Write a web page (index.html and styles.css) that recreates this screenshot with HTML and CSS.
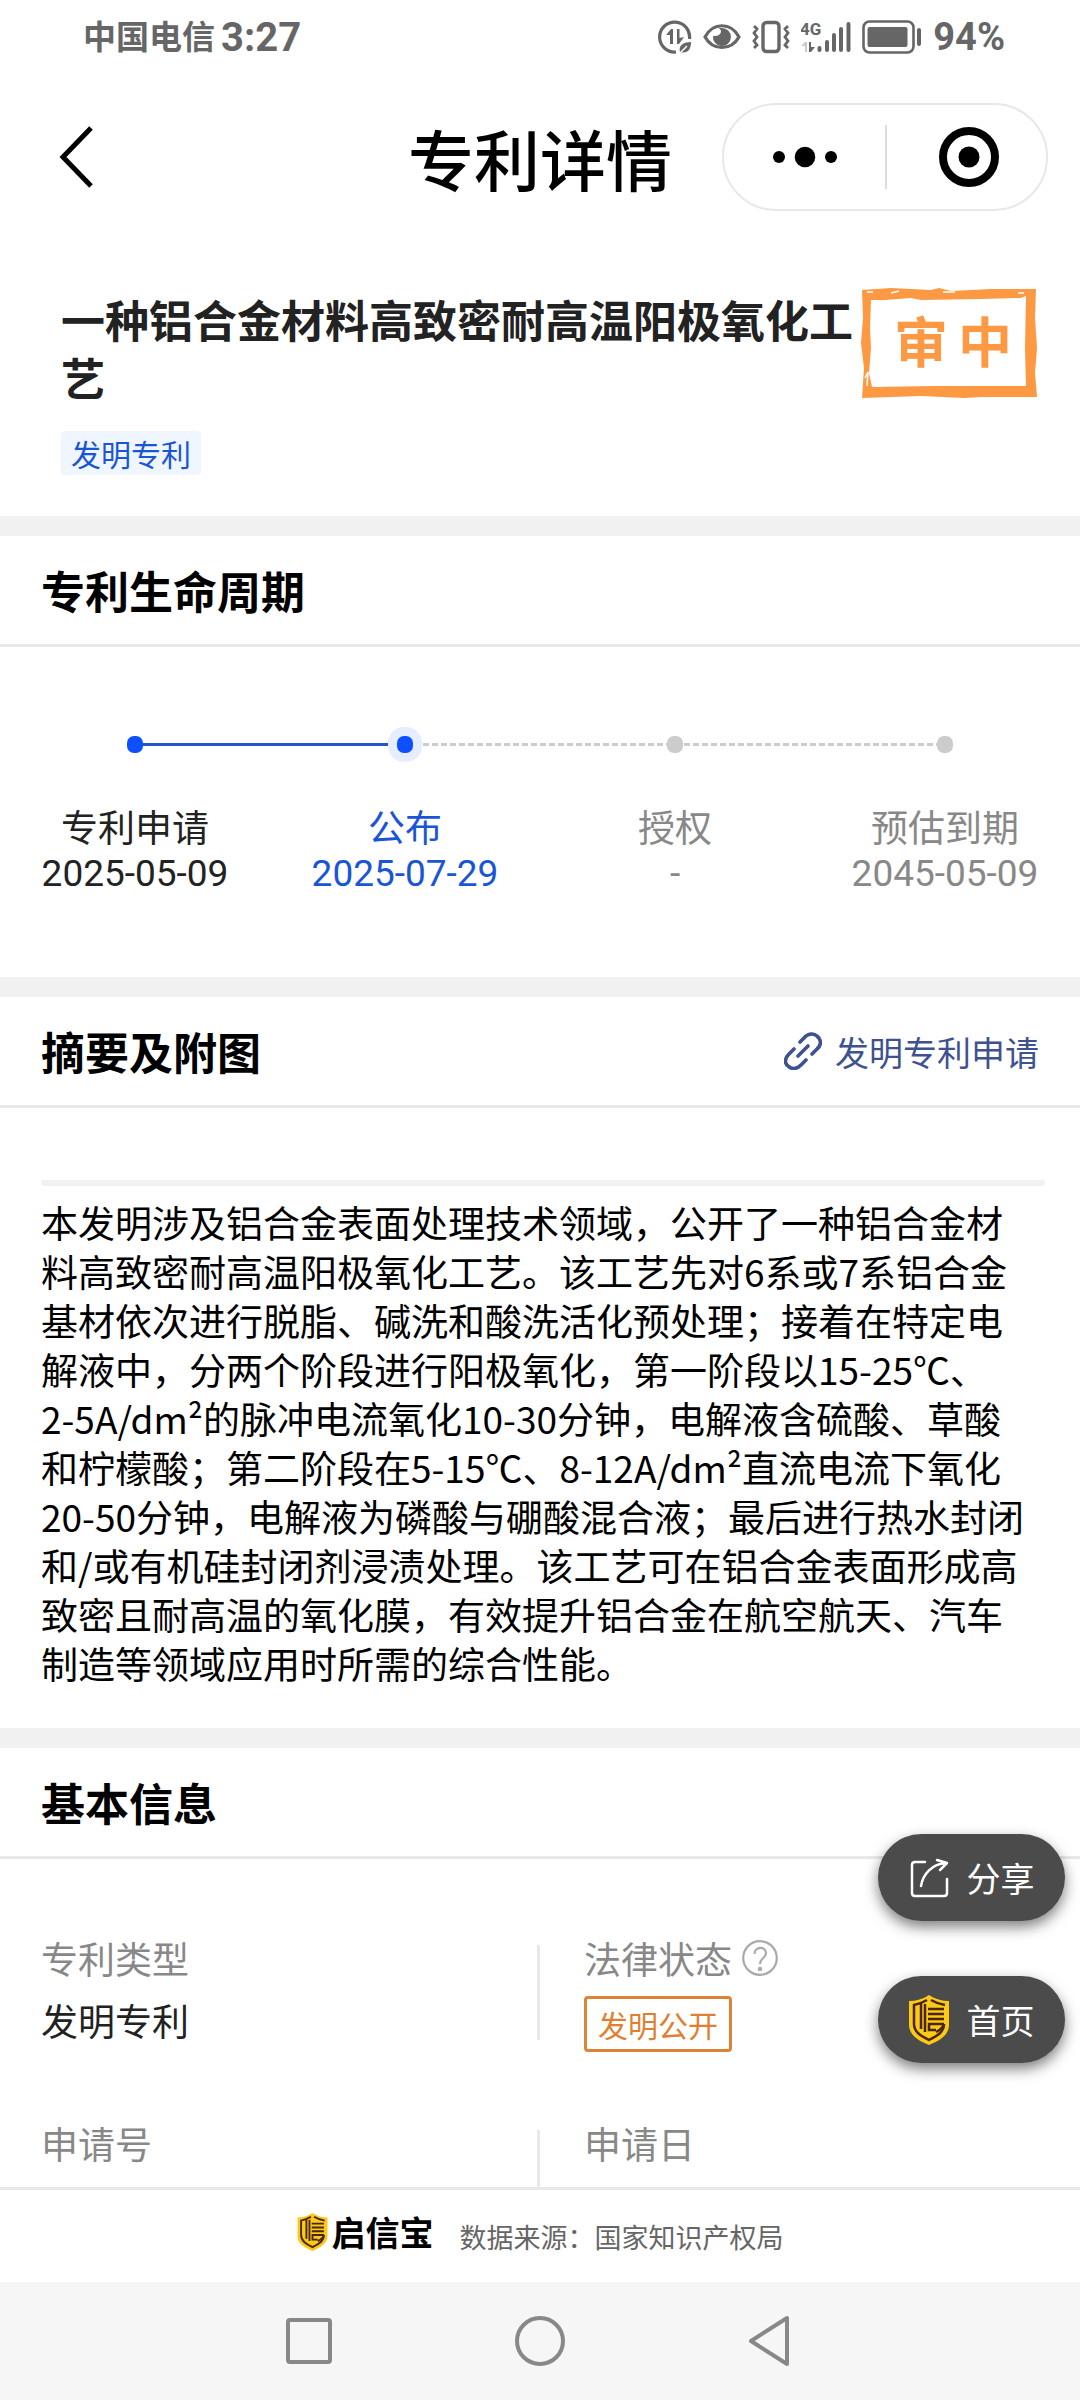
FILE: index.html
```html
<!DOCTYPE html>
<html lang="zh-CN">
    <head>
        <title>专利详情</title>
        <meta charset="utf-8">
        <meta name="viewport" content="width=device-width, initial-scale=1">
        <link rel="stylesheet" href="styles.css">
    </head>
    <body>
        <!-- shield logo, used by the home button and the footer -->
        <svg class="defs" width="0" height="0">
            <symbol id="shield" viewBox="0 0 40 50">
                <path d="M20 0 C14 4 7 6 0 6 V30 C0 40 10 46 20 50 C30 46 40 40 40 30 V6 C33 6 26 4 20 0Z" fill="#fbca16"/>
                <path d="M18 5 C14 7.500 10 9 5 10 V29 C5 37 12 41 20 45 C28 41 35 37 35 29" fill="none" stroke="#4a2606" stroke-width="2.500"/>
                <path d="M22 5 C26 7.500 30 9 36 10 M12 9 V34 M16 9 V37 M19 14 H35 M19 19 H35 M19 24 H35 M35 29 H20 V35 H27 M35 29 C34 33 31 35 27 37" fill="none" stroke="#4a2606" stroke-width="2.500"/>
            </symbol>
        </svg>
        <div class="app">
            <div class="status">
                <span class="carrier">中国电信</span>
                <span class="clock">3:27</span>
                <div class="status-icons">
                    <svg width="34" height="34" viewBox="0 0 34 34">
                        <path d="M31.500 19 A15 15 0 1 0 18 32" fill="none" stroke="#666" stroke-width="3.200"/>
                        <path d="M8 15 L13 9 H15 V24 H12 V15Z M19 9 H21.500 V18 L26 17 L21 24 H19Z" fill="#666"/>
                        <path d="M22 32 C20 25 26 22 33 22 C33 30 29 34 22 32Z" fill="#666"/>
                        <path d="M21 34 L29 26" stroke="#fff" stroke-width="1.500"/>
                    </svg>
                    <svg width="38" height="34" viewBox="0 0 38 34">
                        <path d="M2 17 C10 2 28 2 36 17 C28 31 10 31 2 17Z" fill="none" stroke="#666" stroke-width="3.200"/>
                        <path d="M15 8 C20 9 19 17 10 16 A9 9 0 1 0 19 8Z" fill="#666"/>
                    </svg>
                    <svg width="38" height="34" viewBox="0 0 38 34" fill="none" stroke="#666">
                        <rect x="11" y="2.500" width="16" height="29" rx="3.500" stroke-width="3.400"/>
                        <path d="M2 6 L5 9 L2 13 L5 17 L2 21 L5 25 L2 28 M36 6 L33 9 L36 13 L33 17 L36 21 L33 25 L36 28" stroke-width="2.800"/>
                    </svg>
                    <svg width="50" height="34" viewBox="0 0 50 34">
                        <text x="-1" y="15" class="net">4G</text>
                        <path d="M0 26 L4 22 H6 V32 H4 V26Z" fill="#ccc"/>
                        <path d="M8 22 H10 V27 H14 L10 32 H8Z" fill="#666"/>
                        <path d="M18.500 28 V30 M26 22 V30 M33 15 V30 M40 9 V30 M47.500 4 V30" stroke="#666" stroke-width="4" stroke-linecap="round"/>
                    </svg>
                    <svg width="60" height="34" viewBox="0 0 60 34">
                        <rect x="1.500" y="1.500" width="50" height="31" rx="6" fill="none" stroke="#666" stroke-width="2.600"/>
                        <rect x="5.500" y="7" width="40" height="20" rx="2" fill="#666"/>
                        <rect x="55" y="8" width="4" height="18" rx="2" fill="#666"/>
                    </svg>
                    <span class="battery">94%</span>
                </div>
            </div>

            <header class="navbar">
                <button class="back" aria-label="返回">
                    <svg width="36" height="64" viewBox="0 0 36 64"><path d="M32 3 L4 32 L32 61" fill="none" stroke="#000" stroke-width="5"/></svg>
                </button>
                <span class="navbar-title">专利详情</span>
                <div class="capsule">
                    <button aria-label="更多">
                        <svg width="64" height="22" viewBox="0 0 64 22"><circle cx="6" cy="11" r="6"/><circle cx="32" cy="11" r="10.300"/><circle cx="58" cy="11" r="6"/></svg>
                    </button>
                    <button aria-label="关闭">
                        <svg width="60" height="60" viewBox="0 0 60 60"><circle cx="30" cy="30" r="26" fill="none" stroke="#000" stroke-width="8"/><circle cx="30" cy="30" r="10.500"/></svg>
                    </button>
                </div>
            </header>

            <main>
                <section class="summary">
                    <div class="summary-text">
                        <h1>一种铝合金材料高致密耐高温阳极氧化工艺</h1>
                        <span class="tag">发明专利</span>
                    </div>
                    <svg class="stamp" width="176" height="110" viewBox="0 0 176 110">
                        <path d="M1 2 L30 0 L70 2 L78 0 L90 3 L130 1 L175 1 L174 30 L176 60 L174 85 L176 109 L120 109 L104 110 L60 108 L30 109 L1 110 L3 80 L0 55 L2 30Z M10 12 L9 40 L10 60 L8 85 L11 99 L75 98 L110 98 L165 98 L164 60 L165 8 L160 10 L120 11 L60 12 L50 10 L24 12Z" fill="#fd9843" fill-rule="evenodd"/>
                        <path d="M6 4 H12 M82 4 H94 M30 5 L38 3 M4 90 L7 84 L6 98 M157 5 H163" stroke="#fff" stroke-width="1.500" fill="none"/>
                        <text x="33" y="75">审</text>
                        <text x="97" y="75">中</text>
                    </svg>
                </section>

                <section>
                    <div class="section-head">
                        <h2>专利生命周期</h2>
                    </div>
                    <ol class="timeline">
                        <li class="done"><i></i><span>专利申请</span><time>2025-05-09</time></li>
                        <li class="current"><i></i><span>公布</span><time>2025-07-29</time></li>
                        <li><i></i><span>授权</span><time>-</time></li>
                        <li><i></i><span>预估到期</span><time>2045-05-09</time></li>
                    </ol>
                </section>

                <section>
                    <div class="section-head">
                        <h2>摘要及附图</h2>
                        <a href="#">
                            <svg width="38" height="38" viewBox="0 0 38 38" fill="none" stroke="#3f5290" stroke-width="3.600" stroke-linecap="round">
                                <path d="M16 10 L20 6 C24 1 30 1 33 4 C38 8 37 14 33 17 L28 22"/>
                                <path d="M10 17 L5 22 C1 26 0 31 4 34 C8 38 13 37 17 33 L22 28"/>
                                <path d="M14 24 L24 14"/>
                            </svg>
                            发明专利申请
                        </a>
                    </div>
                    <div class="abstract">
                        <hr>
                        <p>本发明涉及铝合金表面处理技术领域，公开了一种铝合金材料高致密耐高温阳极氧化工艺。该工艺先对6系或7系铝合金基材依次进行脱脂、碱洗和酸洗活化预处理；接着在特定电解液中，分两个阶段进行阳极氧化，第一阶段以15-25℃、<br>2-5A/dm²的脉冲电流氧化10-30分钟，电解液含硫酸、草酸<br>和柠檬酸；第二阶段在5-15℃、8-12A/dm²直流电流下氧化<br>20-50分钟，电解液为磷酸与硼酸混合液；最后进行热水封闭<br>和/或有机硅封闭剂浸渍处理。该工艺可在铝合金表面形成高<br>致密且耐高温的氧化膜，有效提升铝合金在航空航天、汽车<br>制造等领域应用时所需的综合性能。</p>
                    </div>
                </section>

                <section>
                    <div class="section-head">
                        <h2>基本信息</h2>
                    </div>
                    <dl class="info">
                        <div>
                            <dt>专利类型</dt>
                            <dd>发明专利</dd>
                        </div>
                        <div>
                            <dt>法律状态
                                <svg width="36" height="36" viewBox="0 0 36 36" fill="none" stroke="#aaa" stroke-width="2.200">
                                    <circle cx="18" cy="18" r="16.800"/>
                                    <path d="M12.500 14 C12.500 6 24 6 24 13 C24 18 18 18 18 24"/>
                                    <circle cx="18" cy="29" r="1.200" fill="#aaa"/>
                                </svg>
                            </dt>
                            <dd><span class="state">发明公开</span></dd>
                        </div>
                        <div>
                            <dt>申请号</dt>
                        </div>
                        <div>
                            <dt>申请日</dt>
                        </div>
                    </dl>
                </section>
            </main>

            <div class="floats">
                <button>
                    <svg width="40" height="40" viewBox="0 0 40 40" fill="none" stroke="#fff" stroke-width="2.500" stroke-linecap="round" stroke-linejoin="round">
                        <path d="M16 4 H6 Q3 4 3 7 V35 Q3 38 6 38 H35 Q38 38 38 35 V21"/>
                        <path d="M12 28 C14 16 23 6 37 5 M28 2 L38 5 L31 12"/>
                    </svg>
                    分享
                </button>
                <button>
                    <svg width="40" height="50"><use href="#shield"/></svg>
                    首页
                </button>
            </div>

            <footer class="source">
                <div class="brand">
                    <svg width="31" height="38" viewBox="0 0 40 50"><use href="#shield"/></svg>
                    <b>启信宝</b>
                </div>
                <span>数据来源：国家知识产权局</span>
            </footer>

            <nav class="system">
                <button aria-label="任务"><svg width="46" height="46"><rect x="2" y="2" width="42" height="42" rx="2"/></svg></button>
                <button aria-label="主屏幕"><svg width="52" height="52"><circle cx="26" cy="26" r="23"/></svg></button>
                <button aria-label="后退"><svg width="46" height="52"><path d="M39 3 V49 L3 26Z"/></svg></button>
            </nav>
        </div>
    </body>
</html>
```
FILE: styles.css
```css
*{
    box-sizing: border-box;
}
body{
    margin: 0;
    background-color: white;
    color: black;
    font-family: "Noto Sans CJK SC", sans-serif;
    font-size: 37px;
    line-height: 49px;
}
button{
    margin: 0;
    padding: 0;
    border: none;
    background: none;
    font: inherit;
    color: inherit;
}
svg{
    display: block;
    flex: none;
}
h1, h2, p, ol, dl, dd, hr{
    margin: 0;
    padding: 0;
}
.defs{
    position: absolute;
}
.app{
    position: relative;
    display: flex;
    flex-direction: column;
    height: 100vh;
    overflow: hidden;
}

/* phone status bar */
.status{
    display: flex;
    align-items: center;
    height: 74px;
    padding: 0 75px 0 83px;
    color: #666;
    font-family: Roboto, "Noto Sans CJK SC", sans-serif;
    font-weight: bold;
}
.carrier{
    font-size: 33px;
}
.clock{
    margin-left: 6px;
    font-size: 40px;
}
.battery{
    font-size: 38px;
}
.status-icons{
    display: flex;
    align-items: center;
    gap: 11px;
    margin-left: auto;
}
.net{
    font-size: 17px;
    fill: #666;
}

/* title bar */
.navbar{
    display: grid;
    grid-template-columns: 1fr auto 1fr;
    align-items: center;
    height: 166px;
    padding: 0 32px;
}
.back{
    justify-self: start;
    margin-left: 27px;
}
.navbar-title{
    font-size: 66px;
    line-height: 80px;
    font-weight: 500;
}
.capsule{
    justify-self: end;
    display: flex;
    width: 326px;
    height: 108px;
    padding: 20px 0;
    border: 2px solid #e8e8e8;
    border-radius: 54px;
}
.capsule button{
    display: flex;
    align-items: center;
    justify-content: center;
    width: 50%;
}
.capsule button + button{
    padding-left: 5px;
    border-left: 2px solid #ddd;
}

main{
    flex: 1;
    min-height: 0;
    overflow: hidden;
}
section + section{
    border-top: 20px solid #f1f1f1;
}

.summary{
    display: flex;
    justify-content: space-between;
    padding: 48px 43px 41px 61px;
}
.summary-text{
    flex: 1;
}
h1{
    padding-top: 2px;
    font-size: 44px;
    line-height: 58px;
    color: #222;
}
.tag{
    display: inline-block;
    margin-top: 25px;
    padding: 0 10px;
    border-radius: 4px;
    background-color: #f0f6ff;
    color: #1a55d8;
    font-size: 30px;
    line-height: 44px;
}
.stamp text{
    font-size: 54px;
    font-weight: bold;
    fill: #fd9843;
}

.section-head{
    display: flex;
    align-items: center;
    justify-content: space-between;
    height: 111px;
    padding: 0 41px;
    border-bottom: 3px solid #e8e8e8;
}
h2{
    font-size: 44px;
    line-height: 58px;
}
.section-head a{
    display: flex;
    align-items: center;
    gap: 13px;
    color: #3f5290;
    font-size: 34px;
    text-decoration: none;
}

/* life cycle */
.timeline{
    display: grid;
    grid-template-columns: repeat(4, 1fr);
    height: 330px;
    padding-top: 80px;
    list-style: none;
}
.timeline li{
    position: relative;
    display: flex;
    flex-direction: column;
    align-items: center;
    color: #888;
    line-height: 48px;
}
.timeline time{
    font-family: Roboto, sans-serif;
}
.timeline i{
    z-index: 1;
    width: 16px;
    height: 17px;
    margin: 9px 0 49px;
    border-radius: 7px;
    background-color: #ccc;
}
.timeline li + li::before{
    content: "";
    position: absolute;
    top: 16px;
    right: 50%;
    width: 100%;
    height: 3px;
    background: repeating-linear-gradient(90deg, #ccc 0 6px, transparent 6px 9px);
}
.timeline .done{
    color: #222;
}
.timeline .current{
    color: #1a55d8;
}
.timeline .done i, .timeline .current i{
    background-color: #0c50ff;
}
.timeline .current i{
    box-shadow: 0 0 0 9px #e6edff;
}
.timeline .current::before{
    background: #2255cc !important;
}

.abstract{
    padding: 72px 41px 40px;
}
hr{
    height: 6px;
    margin-right: -6px;
    margin-bottom: 12px;
    border: none;
    border-radius: 3px;
    background-color: #f1f1f1;
}

/* basic info */
.info{
    display: grid;
    grid-template-columns: 1fr 1fr;
    row-gap: 90px;
    padding-top: 86px;
}
.info div{
    height: 95px;
    padding-left: 41px;
}
.info div:nth-child(even){
    margin-left: -3px;
    padding-left: 44px;
    border-left: 3px solid #e8e8e8;
}
dt{
    display: flex;
    align-items: center;
    gap: 10px;
    height: 26px;
    color: #888;
}
dd{
    margin-top: 25px;
    color: #222;
}
.state{
    display: inline-block;
    padding: 0 11px;
    border: 3px solid #dd8336;
    border-radius: 4px;
    color: #e07f30;
    font-size: 30px;
    line-height: 50px;
}

.floats{
    position: absolute;
    right: 15px;
    bottom: 337px;
    display: flex;
    flex-direction: column;
    gap: 55px;
}
.floats button{
    display: flex;
    align-items: center;
    justify-content: center;
    gap: 18px;
    width: 187px;
    height: 87px;
    border-radius: 44px;
    background-color: #4b4b4b;
    box-shadow: 0 6px 14px rgba(0, 0, 0, 0.5);
    color: white;
    font-size: 34px;
}

.source{
    display: flex;
    align-items: center;
    justify-content: center;
    gap: 26px;
    height: 95px;
    border-top: 3px solid #e8e8e8;
    background-color: white;
    color: #666;
    font-size: 27px;
}
.brand{
    display: flex;
    align-items: center;
    gap: 4px;
    padding-bottom: 9px;
    color: black;
    font-size: 34px;
}
.system{
    display: flex;
    justify-content: center;
    height: 118px;
    background-color: #f6f6f6;
}
.system button{
    display: flex;
    align-items: center;
    justify-content: center;
    width: 231px;
}
.system svg{
    fill: none;
    stroke: #888;
    stroke-width: 4px;
    stroke-linejoin: round;
}
```
